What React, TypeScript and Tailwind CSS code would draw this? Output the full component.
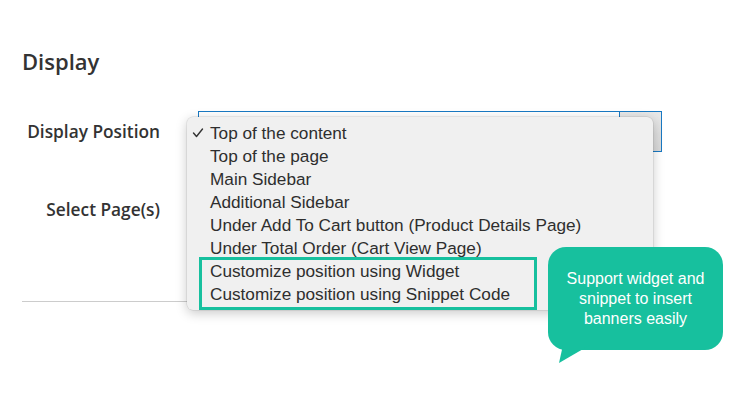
import React from "react";

const items = [
  "Top of the content",
  "Top of the page",
  "Main Sidebar",
  "Additional Sidebar",
  "Under Add To Cart button (Product Details Page)",
  "Under Total Order (Cart View Page)",
  "Customize position using Widget",
  "Customize position using Snippet Code",
];

export default function App() {
  return (
    <div className="relative w-[730px] h-[394px] overflow-hidden bg-white text-[#333]" style={{ fontFamily: "'Open Sans', sans-serif" }}>
      <div className="px-[22px] pt-[46px]">
        <h2 className="text-[22px] leading-[30px] font-semibold text-[#333]">Display</h2>
        <div className="mt-[35px] flex items-start">
          <div className="w-[138px] pt-[9px] text-right text-[17.3px] leading-[24px] font-semibold whitespace-nowrap">Display Position</div>
          <div className="ml-[38px] flex h-[41px] w-[464px] border border-[#1979c3] bg-white">
            <div className="flex-1"></div>
            <div className="w-[42px] border-l border-[#1979c3] bg-gradient-to-b from-[#e8e8e8] to-[#d8d8d8]"></div>
          </div>
        </div>
        <div className="mt-[46px] flex">
          <div className="w-[138px] text-right text-[17.3px] leading-[24px] font-semibold whitespace-nowrap">Select Page(s)</div>
        </div>
        <div className="mt-[79px] h-px bg-[#cccccc]"></div>
      </div>

      <div
        className="absolute left-[187px] top-[117px] w-[466px] h-[193px] rounded-[6px] bg-[#f0f0f0] pt-[5px] shadow-[0_3px_12px_rgba(0,0,0,0.22),0_0_0_0.5px_rgba(0,0,0,0.12)]"
        style={{ fontFamily: "'Liberation Sans', Arial, sans-serif" }}
      >
        <svg className="absolute left-0 top-0" width="20" height="24" viewBox="0 0 20 24">
          <polyline points="6.5,16 9.5,19.5 15.5,12" fill="none" stroke="#333" strokeWidth="1.4" strokeLinecap="round" strokeLinejoin="round" />
        </svg>
        {items.map((t, i) => (
          <div key={i} className="relative flex h-[23px] items-center pl-[23px] text-[17.2px] text-[#2e2e2e] whitespace-nowrap">
            {t}
          </div>
        ))}
        <div className="absolute left-[12px] top-[140px] w-[338px] h-[53px] border-[3px] border-[#17c09e]"></div>
      </div>

      <div
        className="absolute left-[548px] top-[247px] flex w-[175px] h-[103px] items-center justify-center rounded-[18px] bg-[#17c09e] text-center text-[16px] leading-[20px] text-white"
        style={{ fontFamily: "'Liberation Sans', Arial, sans-serif" }}
      >
        <div>Support widget and<br />snippet to insert<br />banners easily</div>
      </div>
      <svg className="absolute left-[555px] top-[345px]" width="40" height="20" viewBox="0 0 40 20">
        <polygon points="8,0 35,0 4,18" fill="#17c09e" />
      </svg>
    </div>
  );
}
